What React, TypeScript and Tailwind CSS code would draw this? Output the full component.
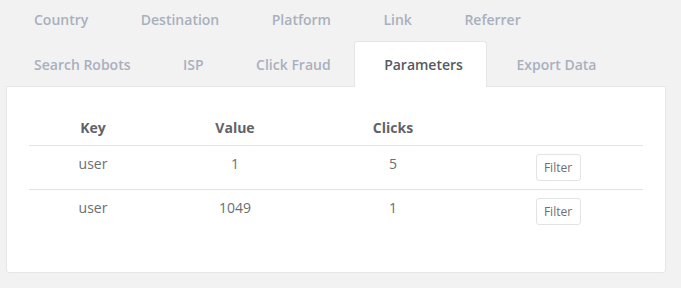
const row1 = ["Country", "Destination", "Platform", "Link", "Referrer"];
const row2 = ["Search Robots", "ISP", "Click Fraud", "Parameters", "Export Data"];

const rows = [
  { key: "user", value: "1", clicks: "5" },
  { key: "user", value: "1049", clicks: "1" },
];

function Tab({ label, active }: { label: string; active?: boolean }) {
  return (
    <li
      className={`pl-[29px] pr-[23.5px] flex items-center text-[14px] font-semibold ${
        active
          ? "bg-white text-[#555a60] border border-b-0 border-[#e6e6e6] rounded-t-[3px] -mb-px h-[46px]"
          : "text-[#a9b0bd] h-[44px]"
      }`}
    >
      {label}
    </li>
  );
}

export default function App() {
  return (
    <div
      className="w-[681px] h-[288px] bg-[#f2f2f2] overflow-hidden"
      style={{ fontFamily: '"Open Sans", sans-serif' }}
    >
      {/* Tabs */}
      <div className="pl-[5px]">
        <ul className="flex -mt-[3px]">
          {row1.map((t) => (
            <Tab key={t} label={t} />
          ))}
        </ul>
        <ul className="flex items-end">
          {row2.map((t) => (
            <Tab key={t} label={t} active={t === "Parameters"} />
          ))}
        </ul>
      </div>

      {/* Panel */}
      <div className="ml-[6px] mr-[15px] bg-white border border-[#e6e6e6] rounded-b-[3px] pt-[23px] pl-[22px] pr-[22px] h-[187px]">
        <div className="text-[14px]">
          <div className="grid grid-cols-[128px_156px_160px_1fr] h-[36px] pt-[8px] border-b border-[#e3e3e3] font-bold text-[#5f6368] text-center leading-[20px]">
            <div>Key</div>
            <div>Value</div>
            <div>Clicks</div>
            <div></div>
          </div>
          {rows.map((r, i) => (
            <div
              key={i}
              className={`grid grid-cols-[128px_156px_160px_1fr] h-[44px] pt-[8px] text-center text-[#6b6e72] leading-[20px] ${
                i < rows.length - 1 ? "border-b border-[#e3e3e3]" : ""
              }`}
            >
              <div>{r.key}</div>
              <div>{r.value}</div>
              <div>{r.clicks}</div>
              <div className="flex justify-center">
                <button className="h-[27px] w-[45px] border border-[#e3e3e3] rounded-[3px] text-[12px] text-[#6b6e72] bg-white">
                  Filter
                </button>
              </div>
            </div>
          ))}
        </div>
      </div>
    </div>
  );
}
